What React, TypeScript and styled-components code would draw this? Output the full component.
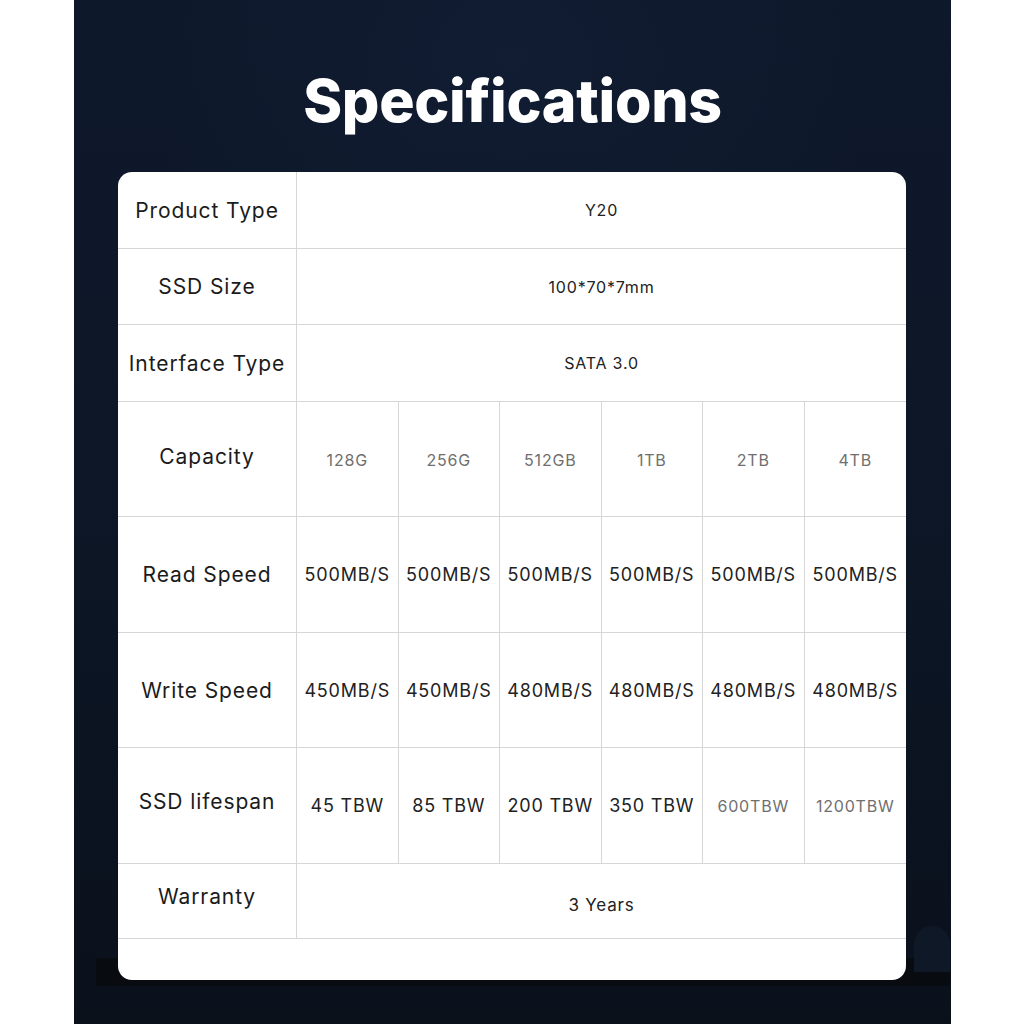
import React from "react";
import styled, { createGlobalStyle } from "styled-components";

const Global = createGlobalStyle`
  html, body { margin: 0; padding: 0; background: #ffffff; }
  body { font-family: "Inter", "Open Sans", sans-serif; }
`;

const Page = styled.div`
  width: 1024px;
  height: 1024px;
  display: flex;
  justify-content: flex-start;
  background: #ffffff;
`;

const Panel = styled.section`
  margin-left: 74px;
  width: 877px;
  height: 1024px;
  box-sizing: border-box;
  padding-top: 66px;
  display: flex;
  flex-direction: column;
  background:
    radial-gradient(ellipse 60% 40% at 50% 6%, rgba(20, 34, 60, 0.45), rgba(20, 34, 60, 0) 70%),
    linear-gradient(180deg, #0e182b 0%, #0d1727 45%, #0b1320 80%, #0a111b 100%);
`;

const Title = styled.h1`
  margin: 0;
  height: 106px;
  text-align: center;
  color: #ffffff;
  font-family: "Inter", sans-serif;
  font-weight: 800;
  font-size: 59px;
  line-height: 70px;
  letter-spacing: -0.3px;
`;

const Card = styled.div`
  position: relative;
  isolation: isolate;
  margin-left: 44px;
  width: 788px;
  height: 808px;
  display: flex;
  flex-direction: column;

  &::before {
    content: "";
    position: absolute;
    left: -22px;
    right: -44px;
    bottom: -6px;
    height: 28px;
    background: #080b10;
    z-index: -1;
  }
  &::after {
    content: "";
    position: absolute;
    right: -44px;
    bottom: 8px;
    width: 36px;
    height: 46px;
    border-radius: 18px 18px 0 0;
    background: #0f1826;
    z-index: -1;
  }
`;

const CardInner = styled.div`
  position: relative;
  z-index: 1;
  display: flex;
  flex-direction: column;
  border-radius: 14px;
  overflow: hidden;
  background: #ffffff;
  height: 100%;
`;

const Row = styled.div<{ $h: number; $split?: boolean }>`
  display: grid;
  grid-template-columns: ${(p) => (p.$split ? "179px repeat(6, 1fr)" : "179px 1fr")};
  height: ${(p) => p.$h}px;
  border-bottom: 1px solid #d6d6d6;
  box-sizing: border-box;
`;

const Label = styled.div<{ $dy?: number }>`
  display: flex;
  align-items: center;
  justify-content: center;
  border-right: 1px solid #d6d6d6;
  font-family: "Inter", sans-serif;
  font-size: 21px;
  font-weight: 400;
  color: #1b1b1b;
  letter-spacing: 0.9px;
  white-space: nowrap;
  padding-bottom: ${(p) => (p.$dy ? p.$dy : 0)}px;
`;

const Value = styled.div<{ $size: number; $muted?: boolean; $last?: boolean; $dy?: number }>`
  display: flex;
  align-items: center;
  justify-content: center;
  border-right: ${(p) => (p.$last ? "none" : "1px solid #d6d6d6")};
  font-family: "Inter", sans-serif;
  font-size: ${(p) => p.$size}px;
  font-weight: 400;
  color: ${(p) => (p.$muted ? "#6f6f6f" : "#222222")};
  white-space: nowrap;
  letter-spacing: 0.8px;
  padding-top: ${(p) => (p.$dy ? p.$dy : 0)}px;
`;

const Spacer = styled.div`
  flex: 1;
`;

type Cell = { text: string; muted?: boolean; size: number };

const single: { label: string; value: string; h: number; size: number }[] = [
  { label: "Product Type", value: "Y20", h: 77, size: 16 },
  { label: "SSD Size", value: "100*70*7mm", h: 76, size: 16 },
  { label: "Interface Type", value: "SATA 3.0", h: 77, size: 16 },
];

const multi: { label: string; h: number; cells: Cell[]; labelDy?: number; valueDy?: number }[] = [
  {
    label: "Capacity",
    h: 115,
    labelDy: 5,
    valueDy: 2,
    cells: ["128G", "256G", "512GB", "1TB", "2TB", "4TB"].map((t) => ({ text: t, muted: true, size: 16 })),
  },
  {
    label: "Read Speed",
    h: 116,
    cells: Array.from({ length: 6 }, () => ({ text: "500MB/S", size: 18 })),
  },
  {
    label: "Write Speed",
    h: 115,
    cells: ["450MB/S", "450MB/S", "480MB/S", "480MB/S", "480MB/S", "480MB/S"].map((t) => ({ text: t, size: 18 })),
  },
  {
    label: "SSD lifespan",
    h: 116,
    labelDy: 8,
    valueDy: -4,
    cells: [
      { text: "45 TBW", size: 18 },
      { text: "85 TBW", size: 18 },
      { text: "200 TBW", size: 18 },
      { text: "350 TBW", size: 18 },
      { text: "600TBW", size: 16, muted: true },
      { text: "1200TBW", size: 16, muted: true },
    ],
  },
];

export default function App() {
  return (
    <>
      <Global />
      <Page>
        <Panel>
          <Title>Specifications</Title>
          <Card>
            <CardInner>
              {single.map((r) => (
                <Row key={r.label} $h={r.h}>
                  <Label $dy={r.label === "Product Type" ? 0 : 0}>{r.label}</Label>
                  <Value $size={r.size} $last $dy={r.label === "Product Type" ? 0 : -1}>
                    {r.value}
                  </Value>
                </Row>
              ))}
              {multi.map((r) => (
                <Row key={r.label} $h={r.h} $split>
                  <Label $dy={r.labelDy}>{r.label}</Label>
                  {r.cells.map((c, i) => (
                    <Value key={i} $size={c.size} $muted={c.muted} $last={i === 5} $dy={r.valueDy}>
                      {c.text}
                    </Value>
                  ))}
                </Row>
              ))}
              <Row $h={75}>
                <Label $dy={10}>Warranty</Label>
                <Value $size={17} $last $dy={8}>
                  3 Years
                </Value>
              </Row>
              <Spacer />
            </CardInner>
          </Card>
        </Panel>
      </Page>
    </>
  );
}
